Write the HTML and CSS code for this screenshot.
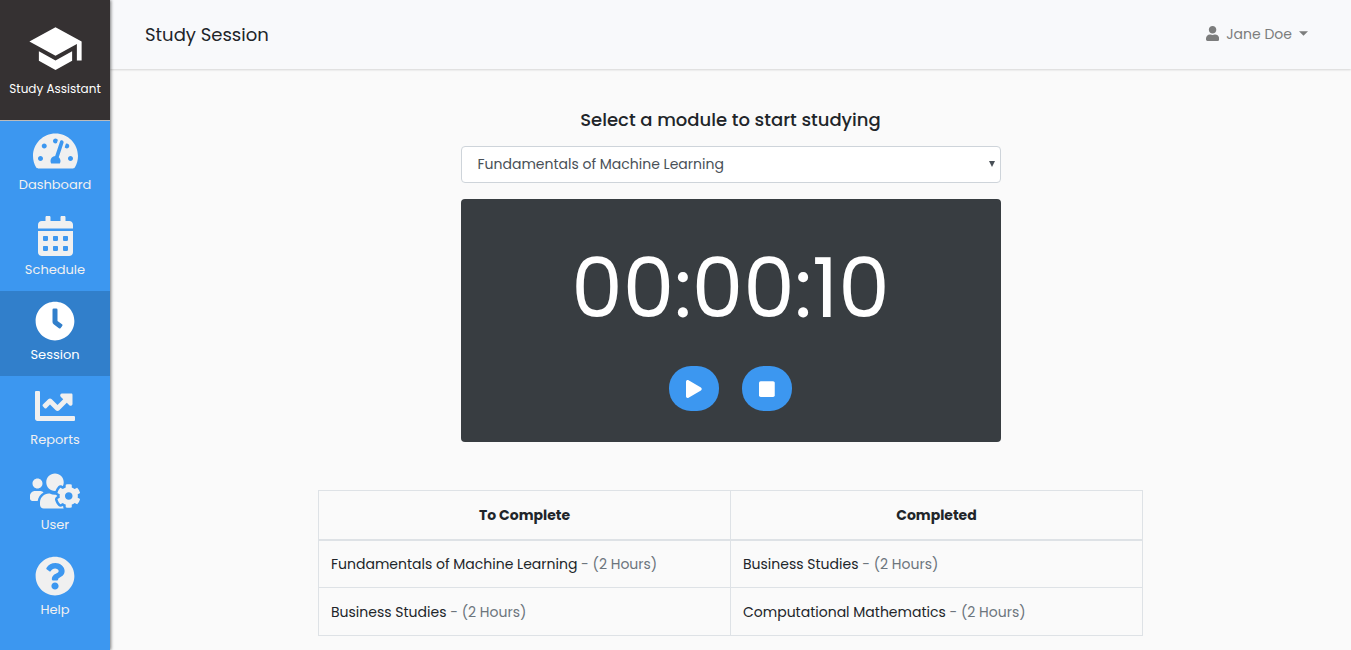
FILE: index.html
```html
<!DOCTYPE html>
<html lang="en">
<head>
<meta charset="utf-8">
<meta name="viewport" content="width=device-width, initial-scale=1">
<title>Study Session</title>
<link rel="stylesheet" href="styles.css">
</head>
<body>
<div class="app">
  <aside class="sidebar">
    <a class="brand" href="#">
      <svg class="brand-icon" viewBox="0 0 24 24" aria-hidden="true"><path d="M5 13.18v4L12 21l7-3.82v-4L12 17l-7-3.82zM12 3L1 9l11 6 9-4.91V17h2V9L12 3z"/></svg>
      <span>Study Assistant</span>
    </a>
    <nav class="nav">
      <a class="nav-item" href="#">
        <svg class="nav-icon" viewBox="0 0 576 512" aria-hidden="true"><path d="M288 32C128.94 32 0 160.94 0 320c0 52.8 14.25 102.26 39.06 144.8 5.61 9.62 16.3 15.2 27.44 15.2h443c11.14 0 21.83-5.58 27.44-15.2C561.75 422.26 576 372.8 576 320c0-159.06-128.94-288-288-288zm0 64c14.71 0 26.58 10.13 30.32 23.65-1.11 2.26-2.64 4.23-3.45 6.67l-9.22 27.67c-5.13 3.49-10.97 6.01-17.64 6.01-17.67 0-32-14.33-32-32S270.33 96 288 96zM96 384c-17.67 0-32-14.33-32-32s14.33-32 32-32 32 14.33 32 32-14.33 32-32 32zm48-160c-17.67 0-32-14.33-32-32s14.33-32 32-32 32 14.33 32 32-14.33 32-32 32zm246.77-72.41l-61.33 184C343.13 347.33 352 364.54 352 384c0 11.72-3.38 22.55-8.88 32H232.88c-5.5-9.45-8.88-20.28-8.88-32 0-33.94 26.5-61.43 59.9-63.59l61.34-184.01c4.17-12.56 17.73-19.45 30.36-15.17 12.57 4.19 19.35 17.79 15.17 30.36zm14.66 57.2l15.52-46.55c3.47-1.29 7.13-2.23 11.05-2.23 17.67 0 32 14.33 32 32s-14.33 32-32 32c-11.38-.01-20.89-6.28-26.57-15.22zM480 384c-17.67 0-32-14.33-32-32s14.33-32 32-32 32 14.33 32 32-14.33 32-32 32z"/></svg>
        <span>Dashboard</span>
      </a>
      <a class="nav-item" href="#">
        <svg class="nav-icon" viewBox="0 0 448 512" aria-hidden="true"><path d="M0 464c0 26.5 21.5 48 48 48h352c26.5 0 48-21.5 48-48V192H0v272zm320-196c0-6.6 5.4-12 12-12h40c6.6 0 12 5.4 12 12v40c0 6.6-5.4 12-12 12h-40c-6.6 0-12-5.4-12-12v-40zm0 128c0-6.6 5.4-12 12-12h40c6.6 0 12 5.4 12 12v40c0 6.6-5.4 12-12 12h-40c-6.6 0-12-5.4-12-12v-40zM192 268c0-6.600 5.400-12 12-12h40c6.600 0 12 5.400 12 12v40c0 6.600-5.400 12-12 12h-40c-6.600 0-12-5.400-12-12v-40zm0 128c0-6.600 5.400-12 12-12h40c6.600 0 12 5.400 12 12v40c0 6.600-5.400 12-12 12h-40c-6.600 0-12-5.400-12-12v-40zM64 268c0-6.600 5.400-12 12-12h40c6.600 0 12 5.400 12 12v40c0 6.600-5.400 12-12 12H76c-6.600 0-12-5.400-12-12v-40zm0 128c0-6.600 5.400-12 12-12h40c6.600 0 12 5.400 12 12v40c0 6.600-5.400 12-12 12H76c-6.600 0-12-5.400-12-12v-40zM400 64h-48V16c0-8.800-7.200-16-16-16h-32c-8.800 0-16 7.200-16 16v48H160V16c0-8.800-7.200-16-16-16h-32c-8.800 0-16 7.200-16 16v48H48C21.500 64 0 85.500 0 112v48h448v-48c0-26.500-21.500-48-48-48z"/></svg>
        <span>Schedule</span>
      </a>
      <a class="nav-item active" href="#" aria-current="page">
        <svg class="nav-icon" viewBox="0 0 512 512" aria-hidden="true"><path d="M256,8C119,8,8,119,8,256S119,504,256,504,504,393,504,256,393,8,256,8Zm92.49,313h0l-20,25a16,16,0,0,1-22.49,2.5h0l-67-49.72a40,40,0,0,1-15-31.23V112a16,16,0,0,1,16-16h32a16,16,0,0,1,16,16V256l58,42.5A16,16,0,0,1,348.49,321Z"/></svg>
        <span>Session</span>
      </a>
      <a class="nav-item" href="#">
        <svg class="nav-icon" viewBox="0 0 512 512" aria-hidden="true"><path d="M496 384H64V80c0-8.840-7.160-16-16-16H16C7.160 64 0 71.160 0 80v336c0 17.670 14.330 32 32 32h464c8.840 0 16-7.160 16-16v-32c0-8.840-7.160-16-16-16zM464 96H345.940c-21.380 0-32.090 25.850-16.970 40.970l32.400 32.400L288 242.750l-73.370-73.370c-12.500-12.500-32.760-12.500-45.250 0l-68.690 68.690c-6.250 6.250-6.250 16.380 0 22.630l22.620 22.620c6.250 6.250 16.380 6.250 22.630 0L192 237.250l73.370 73.370c12.500 12.500 32.760 12.500 45.250 0l96-96 32.400 32.400c15.120 15.120 40.970 4.410 40.970-16.970V112c.01-8.840-7.150-16-15.990-16z"/></svg>
        <span>Reports</span>
      </a>
      <a class="nav-item" href="#">
        <svg class="nav-icon" viewBox="0 0 640 512" aria-hidden="true"><path d="M610.5 341.3c2.6-14.1 2.6-28.5 0-42.6l25.8-14.9c3-1.7 4.3-5.2 3.3-8.500-6.700-21.600-18.200-41.200-33.200-57.400-2.300-2.500-6-3.100-9-1.400l-25.800 14.900c-10.900-9.300-23.400-16.500-36.900-21.300v-29.800c0-3.400-2.400-6.400-5.700-7.100-22.300-5-45-4.800-66.200 0-3.300.7-5.700 3.700-5.700 7.100v29.800c-13.500 4.800-26 12-36.900 21.300l-25.800-14.900c-2.900-1.700-6.700-1.100-9 1.400-15 16.200-26.500 35.800-33.200 57.400-1 3.300.4 6.800 3.300 8.500l25.800 14.900c-2.600 14.100-2.600 28.500 0 42.600l-25.800 14.900c-3 1.700-4.300 5.200-3.300 8.500 6.700 21.600 18.200 41.100 33.200 57.400 2.300 2.500 6 3.100 9 1.400l25.800-14.900c10.900 9.300 23.400 16.500 36.900 21.300v29.800c0 3.400 2.400 6.400 5.700 7.100 22.300 5 45 4.800 66.200 0 3.300-.7 5.700-3.700 5.700-7.100v-29.800c13.500-4.800 26-12 36.900-21.300l25.800 14.900c2.900 1.700 6.700 1.100 9-1.400 15-16.200 26.500-35.800 33.200-57.400 1-3.300-.4-6.800-3.300-8.500l-25.800-14.900zM496 368.500c-26.800 0-48.500-21.800-48.500-48.500s21.800-48.500 48.500-48.500 48.500 21.800 48.500 48.500-21.700 48.500-48.500 48.500zM96 224c35.300 0 64-28.700 64-64s-28.700-64-64-64-64 28.700-64 64 28.700 64 64 64zm224 32c1.900 0 3.700-.5 5.600-.6 8.300-21.700 20.500-42.100 36.300-59.200 7.400-8 17.900-12.600 28.900-12.600 6.900 0 13.700 1.800 19.600 5.300l7.900 4.600c.8-.5 1.600-.9 2.400-1.400 7-14.600 11.200-30.800 11.200-48 0-61.900-50.100-112-112-112S208 82.100 208 144c0 61.900 50.100 112 112 112zm105.200 194.500c-2.300-1.200-4.600-2.600-6.800-3.900-8.200 4.800-15.300 9.800-27.500 9.800-10.900 0-21.400-4.600-28.900-12.600-18.300-19.800-32.300-43.900-40.200-69.600-10.700-34.500 24.900-49.700 25.800-50.300-.1-2.600-.1-5.200 0-7.800l-7.900-4.600c-3.800-2.200-7-5-9.800-8.100-3.300.2-6.500.6-9.800.6-24.600 0-47.600-6-68.500-16h-8.300C179.600 288 128 339.600 128 403.200V432c0 26.500 21.500 48 48 48h255.400c-3.700-6-6.200-12.800-6.200-20.300v-9.200zM173.100 274.600C161.500 263.100 145.600 256 128 256H64c-35.300 0-64 28.700-64 64v32c0 17.700 14.300 32 32 32h65.900c6.300-47.400 34.900-87.300 75.200-109.400z"/></svg>
        <span>User</span>
      </a>
      <a class="nav-item" href="#">
        <svg class="nav-icon" viewBox="0 0 512 512" aria-hidden="true"><path d="M504 256c0 136.997-111.043 248-248 248S8 392.997 8 256C8 119.083 119.043 8 256 8s248 111.083 248 248zM262.655 90c-54.497 0-89.255 22.957-116.549 63.758-3.536 5.286-2.353 12.415 2.715 16.258l34.699 26.310c5.205 3.947 12.621 3.008 16.665-2.122 17.864-22.658 30.113-35.797 57.303-35.797 20.429 0 45.698 13.148 45.698 32.958 0 14.976-12.363 22.667-32.534 33.976C247.128 238.528 216 254.941 216 296v4c0 6.627 5.373 12 12 12h56c6.627 0 12-5.373 12-12v-1.333c0-28.462 83.186-29.647 83.186-106.667 0-58.002-60.165-102-116.531-102zM256 338c-25.365 0-46 20.635-46 46 0 25.364 20.635 46 46 46s46-20.636 46-46c0-25.365-20.635-46-46-46z"/></svg>
        <span>Help</span>
      </a>
    </nav>
  </aside>
  <div class="page">
    <header class="topbar">
      <h1 class="page-title">Study Session</h1>
      <button class="user-menu" type="button" aria-haspopup="true">
        <svg class="user-icon" viewBox="0 0 448 512" aria-hidden="true"><path d="M224 256c70.700 0 128-57.300 128-128S294.700 0 224 0 96 57.300 96 128s57.300 128 128 128zm89.600 32h-16.700c-22.200 10.200-46.900 16-72.900 16s-50.600-5.800-72.900-16h-16.700C60.200 288 0 348.200 0 422.400V464c0 26.500 21.500 48 48 48h352c26.500 0 48-21.500 48-48v-41.600c0-74.200-60.200-134.400-134.400-134.400z"/></svg>
        <span>Jane Doe</span>
        <svg class="caret" viewBox="0 0 10 5" aria-hidden="true"><path d="M0 0h10L5 5z"/></svg>
      </button>
    </header>
    <main class="content">
      <section class="session">
        <label class="module-label" for="module">Select a module to start studying</label>
        <div class="select-wrap">
          <select class="module-select" id="module">
            <option>Fundamentals of Machine Learning</option>
            <option>Business Studies</option>
            <option>Computational Mathematics</option>
          </select>
          <svg class="select-arrow" viewBox="0 0 6 6" aria-hidden="true"><path d="M0 0h6L3 6z"/></svg>
        </div>
        <div class="timer">
          <div class="clock" role="timer">00:00:10</div>
          <div class="controls">
            <button class="control" type="button" aria-label="Start"><svg class="control-icon" viewBox="0 0 448 512" aria-hidden="true"><path d="M424.400 214.700L72.400 6.600C43.800-10.300 0 6.100 0 47.900V464c0 37.500 40.700 60.100 72.400 41.300l352-208c31.400-18.500 31.500-64.100 0-82.600z"/></svg></button>
            <button class="control" type="button" aria-label="Stop"><svg class="control-icon" viewBox="0 0 448 512" aria-hidden="true"><rect y="32" width="448" height="448" rx="48"/></svg></button>
          </div>
        </div>
      </section>
      <table class="modules">
        <thead>
          <tr><th scope="col">To Complete</th><th scope="col">Completed</th></tr>
        </thead>
        <tbody>
          <tr>
            <td>Fundamentals of Machine Learning <span class="hours">- (2 Hours)</span></td>
            <td>Business Studies <span class="hours">- (2 Hours)</span></td>
          </tr>
          <tr>
            <td>Business Studies <span class="hours">- (2 Hours)</span></td>
            <td>Computational Mathematics <span class="hours">- (2 Hours)</span></td>
          </tr>
        </tbody>
      </table>
    </main>
  </div>
</div>
</body>
</html>
```

FILE: styles.css
```css
*, *::before, *::after { box-sizing: border-box; }

body {
  margin: 0;
  background: #fafafa;
  color: #212529;
  font-family: Poppins, Inter, "Open Sans", sans-serif;
  font-size: 14px;
  line-height: 24px;
}

svg { display: block; fill: currentColor; }

.app { display: flex; min-height: 100vh; }

.sidebar {
  flex: 0 0 110px;
  background: #3c97f0;
  box-shadow: 1px 0 3px rgba(0, 0, 0, 0.5);
  z-index: 1;
  font-size: 13px;
  line-height: 20px;
  text-align: center;
}

.brand {
  display: flex;
  flex-direction: column;
  align-items: center;
  gap: 2px;
  padding: 20px 0 21px;
  background: #353132;
  border-bottom: 1px solid #bbb;
  color: #fff;
  font-size: 12px;
  text-decoration: none;
  white-space: nowrap;
}
.brand-icon { width: 57px; height: 57px; }

.nav-item {
  display: flex;
  flex-direction: column;
  align-items: center;
  gap: 4px;
  padding: 10px 0 11px;
  color: #f0f0f0;
  text-decoration: none;
}
.nav-item.active { background: #317fcb; color: #fff; }
.nav-icon { height: 40px; }

.page { flex: 1; min-width: 0; }

.topbar {
  display: flex;
  align-items: center;
  justify-content: space-between;
  height: 69px;
  padding: 0 43px 0 35px;
  background: #f8f9fb;
  box-shadow: 0 1px 2px rgba(0, 0, 0, 0.15);
}
.page-title { margin: 0; font-size: 18px; font-weight: 400; }

.user-menu {
  display: flex;
  align-items: center;
  gap: 7px;
  padding: 0 0 2px;
  border: 0;
  background: none;
  color: #7c7d7d;
  font: inherit;
}
.user-icon { height: 15px; }
.caret { width: 9px; height: 5px; }

.content {
  display: flex;
  flex-direction: column;
  align-items: center;
  padding: 39px 20px 14px;
}

.session { width: 100%; max-width: 540px; }
.module-label {
  display: block;
  margin-bottom: 14px;
  font-size: 18px;
  font-weight: 500;
  text-align: center;
}

.select-wrap { position: relative; margin-bottom: 16px; }
.module-select {
  display: block;
  width: 100%;
  height: 37px;
  padding: 0 16px 1px;
  border: 1px solid #ced4da;
  border-radius: 4px;
  background: #fff;
  color: #495057;
  font: inherit;
  appearance: none;
}
.select-arrow {
  position: absolute;
  top: 15px;
  right: 6px;
  width: 6px;
  height: 6px;
  color: #495057;
  pointer-events: none;
}

.timer {
  padding: 40px 20px 31px;
  border-radius: 4px;
  background: #383d41;
  color: #fff;
  text-align: center;
}
.clock { font-size: 82px; line-height: 100px; }
.controls {
  display: flex;
  justify-content: center;
  gap: 23px;
  margin-top: 27px;
}
.control {
  display: flex;
  align-items: center;
  justify-content: center;
  width: 50px;
  height: 45px;
  padding: 0;
  border: 0;
  border-radius: 22px;
  background: #3c97f0;
  color: #fff;
}
.control-icon { height: 18px; }

.modules {
  width: 100%;
  max-width: 825px;
  margin-top: 48px;
  border-collapse: collapse;
  table-layout: fixed;
}
.modules th, .modules td {
  height: 48px;
  padding: 11px 12px;
  border: 1px solid #dee2e6;
  text-align: left;
}
.modules th {
  height: 49px;
  border-bottom-width: 2px;
  font-weight: 700;
  text-align: center;
}
.hours { color: #6c757d; }
```
